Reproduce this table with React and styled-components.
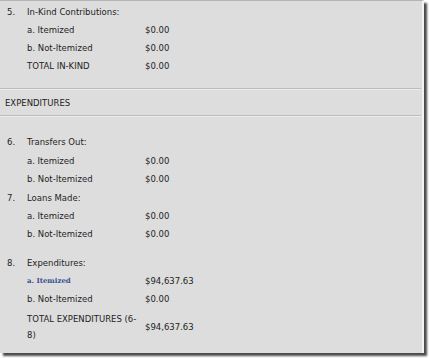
import React from 'react';
import styled, { createGlobalStyle } from 'styled-components';

const Global = createGlobalStyle`
  html, body { margin: 0; padding: 0; background: #ffffff; }
  body { width: 429px; height: 358px; overflow: hidden; }
`;

export default function App() {
  return (
    <>
      <Global />
      <Frame>
        <Panel>
          <Block pad="2px 0 12px">
            <Row h={18}><Num>5.</Num><Label>In-Kind Contributions:</Label></Row>
            <Row h={18}><Num /><Label>a. Itemized</Label><Value>$0.00</Value></Row>
            <Row h={17}><Num /><Label>b. Not-Itemized</Label><Value>$0.00</Value></Row>
            <Row h={20}><Num /><Label>TOTAL IN-KIND</Label><Value>$0.00</Value></Row>
          </Block>
          <Rule />
          <Heading>EXPENDITURES</Heading>
          <Rule />
          <Block pad="16px 0 0">
            <Row h={18}><Num>6.</Num><Label>Transfers Out:</Label></Row>
            <Row h={19}><Num /><Label>a. Itemized</Label><Value>$0.00</Value></Row>
            <Row h={18}><Num /><Label>b. Not-Itemized</Label><Value>$0.00</Value></Row>
            <Row h={19}><Num>7.</Num><Label>Loans Made:</Label></Row>
            <Row h={18}><Num /><Label>a. Itemized</Label><Value>$0.00</Value></Row>
            <Row h={17}><Num /><Label>b. Not-Itemized</Label><Value>$0.00</Value></Row>
          </Block>
          <Block pad="12px 0 0">
            <Row h={18}><Num>8.</Num><Label>Expenditures:</Label></Row>
            <Row h={17}><Num /><Link>a. Itemized</Link><Value>$94,637.63</Value></Row>
            <Row h={20}><Num /><Label>b. Not-Itemized</Label><Value>$0.00</Value></Row>
            <Row h={36}><Num /><Label wrap>TOTAL EXPENDITURES (6-8)</Label><Value>$94,637.63</Value></Row>
          </Block>
        </Panel>
      </Frame>
    </>
  );
}

const Frame = styled.div`
  width: 429px;
  height: 358px;
  padding: 0 6px 6px 0;
  box-sizing: border-box;
`;

const Panel = styled.div`
  box-sizing: border-box;
  width: 424px;
  height: 353px;
  background: #dddddd;
  border-top: 1px solid #b4b4b4;
  border-right: 2px solid #f2f2f2;
  box-shadow: 3px 3px 2px #4a4a4a;
  font-family: "DejaVu Sans", Verdana, sans-serif;
  font-size: 8.5px;
  color: #1e1e1e;
  display: flex;
  flex-direction: column;
`;

const Block = styled.div`
  display: flex;
  flex-direction: column;
  padding: ${(p) => p.pad};
`;

const Row = styled.div`
  display: flex;
  align-items: center;
  height: ${(p) => p.h}px;
`;

const Num = styled.span`
  width: 20px;
  padding-left: 7px;
  flex-shrink: 0;
`;

const Label = styled.span`
  width: ${(p) => (p.wrap ? '112px' : '118px')};
  margin-right: ${(p) => (p.wrap ? '6px' : '0')};
  line-height: 16px;
  flex-shrink: 0;
`;

const Link = styled.span`
  width: 118px;
  flex-shrink: 0;
  font-family: "DejaVu Serif", "Liberation Serif", serif;
  font-weight: bold;
  font-size: 7px;
  color: #3a4f8f;
`;

const Value = styled.span`
  white-space: nowrap;
`;

const Rule = styled.div`
  width: 421px;
  height: 0;
  border-top: 1px solid #bcbcbc;
  border-bottom: 1px solid #ececec;
`;

const Heading = styled.div`
  height: 25px;
  display: flex;
  align-items: center;
  padding-left: 5px;
`;
